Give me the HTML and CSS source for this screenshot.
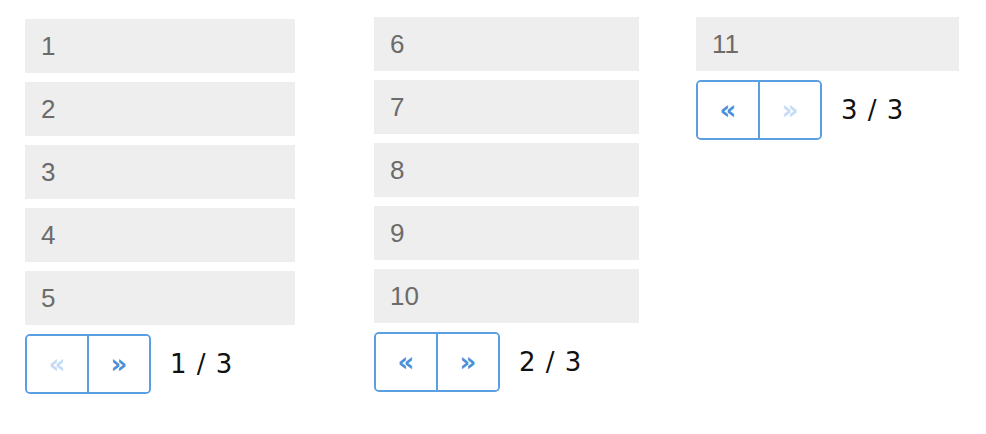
FILE: index.html
```html
<!DOCTYPE html>
<html>
<head>
<meta charset="utf-8">
<link rel="stylesheet" href="styles.css">
</head>
<body>
<div class="board">
  <div class="col col-1">
    <div class="item">1</div>
    <div class="item">2</div>
    <div class="item">3</div>
    <div class="item">4</div>
    <div class="item">5</div>
    <div class="pager">
      <div class="btns">
        <button class="btn disabled">«</button>
        <button class="btn">»</button>
      </div>
      <span class="count">1 / 3</span>
    </div>
  </div>
  <div class="col col-2">
    <div class="item">6</div>
    <div class="item">7</div>
    <div class="item">8</div>
    <div class="item">9</div>
    <div class="item">10</div>
    <div class="pager">
      <div class="btns">
        <button class="btn">«</button>
        <button class="btn">»</button>
      </div>
      <span class="count">2 / 3</span>
    </div>
  </div>
  <div class="col col-3">
    <div class="item">11</div>
    <div class="pager">
      <div class="btns">
        <button class="btn">«</button>
        <button class="btn disabled">»</button>
      </div>
      <span class="count">3 / 3</span>
    </div>
  </div>
</div>
</body>
</html>
```
FILE: styles.css
```css
html, body {
  margin: 0;
  padding: 0;
  background: #fff;
}
.board {
  display: flex;
  align-items: flex-start;
}
.col {
  display: flex;
  flex-direction: column;
  gap: 9px;
}
.col-1 { width: 270px; margin-left: 25px; margin-top: 19px; }
.col-2 { width: 265px; margin-left: 79px; margin-top: 17px; }
.col-3 { width: 263px; margin-left: 57px; margin-top: 17px; }
.item {
  height: 54px;
  background: #eeeeee;
  color: #6b6b6b;
  font-family: "Liberation Sans", Arial, sans-serif;
  font-size: 26px;
  display: flex;
  align-items: center;
  padding-left: 16px;
}
.pager {
  display: flex;
  align-items: center;
  gap: 19px;
}
.btns {
  display: flex;
  width: 126px;
  height: 60px;
  box-sizing: border-box;
  border: 2px solid #5b9fe3;
  border-radius: 5px;
  overflow: hidden;
}
.btn {
  flex: 1;
  margin: 0;
  padding: 0;
  border: none;
  background: #fff;
  color: #4a90d9;
  font-family: "DejaVu Sans", sans-serif;
  font-weight: bold;
  font-size: 26px;
  display: flex;
  align-items: center;
  justify-content: center;
}
.btn + .btn {
  border-left: 2px solid #5b9fe3;
}
.btn.disabled {
  color: #c4dcf6;
}
.count {
  font-family: "DejaVu Sans", sans-serif;
  font-size: 26px;
  color: #111;
  letter-spacing: 1px;
}
```
